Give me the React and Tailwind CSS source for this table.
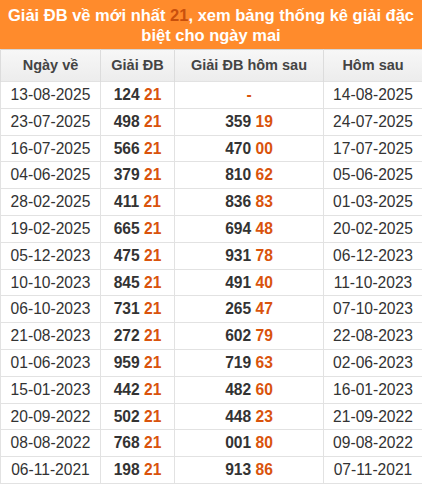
const rows = [
  ["13-08-2025", "124", "21", null, null, "14-08-2025"],
  ["23-07-2025", "498", "21", "359", "19", "24-07-2025"],
  ["16-07-2025", "566", "21", "470", "00", "17-07-2025"],
  ["04-06-2025", "379", "21", "810", "62", "05-06-2025"],
  ["28-02-2025", "411", "21", "836", "83", "01-03-2025"],
  ["19-02-2025", "665", "21", "694", "48", "20-02-2025"],
  ["05-12-2023", "475", "21", "931", "78", "06-12-2023"],
  ["10-10-2023", "845", "21", "491", "40", "11-10-2023"],
  ["06-10-2023", "731", "21", "265", "47", "07-10-2023"],
  ["21-08-2023", "272", "21", "602", "79", "22-08-2023"],
  ["01-06-2023", "959", "21", "719", "63", "02-06-2023"],
  ["15-01-2023", "442", "21", "482", "60", "16-01-2023"],
  ["20-09-2022", "502", "21", "448", "23", "21-09-2022"],
  ["08-08-2022", "768", "21", "001", "80", "09-08-2022"],
  ["06-11-2021", "198", "21", "913", "86", "07-11-2021"],
];

export default function App() {
  return (
    <div
      className="w-[422px] bg-white text-[#333]"
      style={{ fontFamily: '"Liberation Sans", Arial, sans-serif' }}
    >
      <div className="flex h-[49px] flex-col items-center justify-center bg-[#ff8b2c] px-2 text-center text-[16.5px] font-bold leading-[20px] text-white">
        <div>
          Giải ĐB về mới nhất <span className="text-[#c9500c]">21</span>, xem bảng thống kê giải đặc
        </div>
        <div>biệt cho ngày mai</div>
      </div>
      <table className="w-[422px] table-fixed border-collapse border border-[#d6d6d6] text-[15.6px]">
        <colgroup>
          <col className="w-[100px]" />
          <col className="w-[74px]" />
          <col className="w-[149px]" />
          <col className="w-[99px]" />
        </colgroup>
        <thead>
          <tr className="h-[32px] bg-gradient-to-b from-[#f7f7f7] to-[#ececec] text-[14.5px] font-bold text-[#444]">
            <th className="border-x border-[#dcdcdc] font-bold">Ngày về</th>
            <th className="border-x border-[#dcdcdc] font-bold">Giải ĐB</th>
            <th className="border-x border-[#dcdcdc] font-bold">Giải ĐB hôm sau</th>
            <th className="border-x border-[#dcdcdc] font-bold">Hôm sau</th>
          </tr>
        </thead>
        <tbody>
          {rows.map((r) => (
            <tr key={r[0]} className="h-[26.8px] leading-none">
              <td className="border border-[#e2e2e2] text-center">{r[0]}</td>
              <td className="border border-[#e2e2e2] text-center font-bold">
                {r[1]} <span className="text-[#d9530c]">{r[2]}</span>
              </td>
              <td className="border border-[#e2e2e2] text-center font-bold">
                {r[3] ? (
                  <>
                    {r[3]} <span className="text-[#d9530c]">{r[4]}</span>
                  </>
                ) : (
                  <span className="text-[#d9530c]">-</span>
                )}
              </td>
              <td className="border border-[#e2e2e2] text-center">{r[5]}</td>
            </tr>
          ))}
        </tbody>
      </table>
    </div>
  );
}
